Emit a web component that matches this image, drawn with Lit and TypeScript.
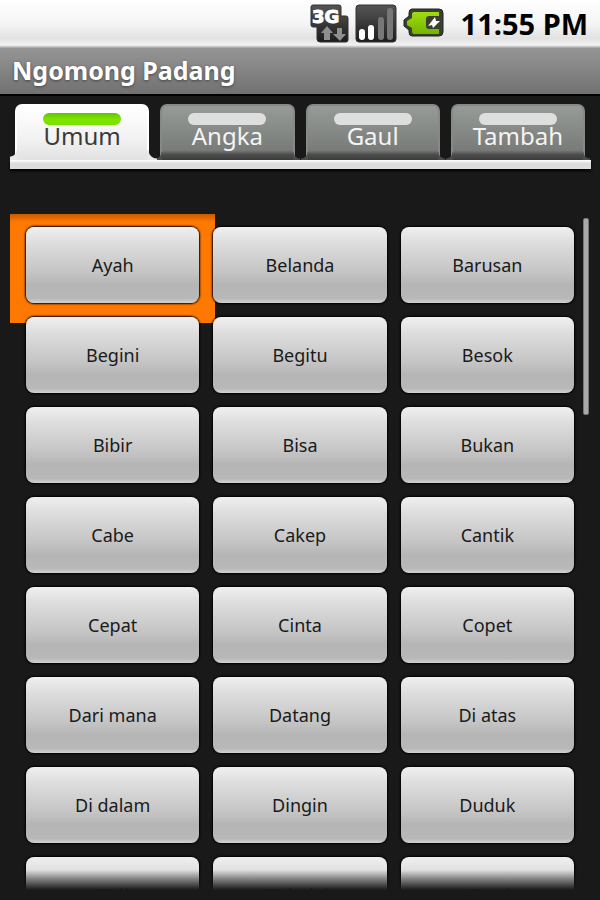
import { LitElement, html, css } from "lit";
import { customElement, state } from "lit/decorators.js";
import { classMap } from "lit/directives/class-map.js";

const TABS = ["Umum", "Angka", "Gaul", "Tambah"];

const WORDS = [
  "Ayah", "Belanda", "Barusan",
  "Begini", "Begitu", "Besok",
  "Bibir", "Bisa", "Bukan",
  "Cabe", "Cakep", "Cantik",
  "Cepat", "Cinta", "Copet",
  "Dari mana", "Datang", "Di atas",
  "Di dalam", "Dingin", "Duduk",
  "Gaji", "Geledah", "Gatal",
];

@customElement("status-bar")
class StatusBar extends LitElement {
  static styles = css`
    :host {
      display: flex;
      align-items: center;
      justify-content: flex-end;
      height: 48px;
      padding-right: 12px;
      box-sizing: border-box;
      background: linear-gradient(#ffffff, #f4f4f4 50%, #e2e2e2 80%, #f2f2f2 94%, #a0a0a0);
      color: #000;
      font-family: "Noto Sans", "Open Sans", sans-serif;
    }
    .icon { display: block; flex: none; }
    .network { font: 700 18px "DejaVu Sans", sans-serif; }
    .clock { margin-left: 15px; font-size: 29px; line-height: 32px; font-weight: 700; }
  `;

  render() {
    return html`
      <svg class="icon" width="136" height="48" viewBox="0 0 136 48" role="img" aria-label="3G, signal, battery charging">
        <defs>
          <linearGradient id="dark" x1="0" y1="0" x2="0" y2="1">
            <stop offset="0" stop-color="#555" />
            <stop offset="1" stop-color="#1c1c1c" />
          </linearGradient>
          <linearGradient id="green" x1="0" y1="0" x2="0" y2="1">
            <stop offset="0" stop-color="#a0dc10" />
            <stop offset="1" stop-color="#72b400" />
          </linearGradient>
        </defs>
        <path d="M3 5H29Q31 5 31 7V16H36Q38 16 38 18V40Q38 42 36 42H10Q7 42 7 39V27H3Q1 27 1 25V7Q1 5 3 5Z" fill="url(#dark)" stroke="#333" />
        <text class="network" x="2" y="23" fill="#fff" stroke="#fff">3G</text>
        <path d="M17 26L23 33H20V40H14V33H11ZM27 28H32V34H36L30 41L23 34H27Z" fill="#8f8f8f" />
        <rect x="46" y="5" width="40" height="37" rx="3" fill="url(#dark)" stroke="#333" />
        <rect x="49" y="29" width="6" height="11" rx="3" fill="#fff" />
        <rect x="58" y="25" width="6" height="15" rx="3" fill="#fff" />
        <rect x="68" y="17" width="6" height="23" rx="3" fill="#777" />
        <rect x="77" y="8" width="6" height="32" rx="3" fill="#777" />
        <path d="M102 9H129Q133 9 133 13V32Q133 36 129 36H102Q99 36 99 32V30L94 26V20L99 16V13Q99 9 102 9Z" fill="#3b3f30" stroke="#222" />
        <path d="M104 12H129V16H119Q116 16 116 19V26Q116 29 119 29H129V34H104Q102 34 102 31V28L97 25V21L102 18V15Q102 12 104 12Z" fill="url(#green)" />
        <path d="M118 26L125 17L126 21H130L123 28L122 25Z" fill="#fff" />
      </svg>
      <time class="clock" datetime="23:55">11:55 PM</time>
    `;
  }
}

@customElement("tab-strip")
class TabStrip extends LitElement {
  @state() selected = 0;

  static styles = css`
    :host { display: block; padding: 8px 9px 0 10px; }
    .tabs { display: grid; grid-template-columns: repeat(4, 1fr); }
    .tab {
      position: relative;
      display: flex;
      flex-direction: column;
      align-items: center;
      height: 56px;
      margin: 0 6px 0 5px;
      padding: 7px 0 0;
      border: 2px solid #868a86;
      border-bottom: 0;
      border-radius: 7px 7px 0 0;
      background: linear-gradient(#979b97, #787b78 82%, #4c4c4c 90%, #3c3c3c);
      color: #f4f4f4;
      font: 24px/26px "Noto Sans", "Open Sans", sans-serif;
    }
    .tab::before, .tab::after {
      content: "";
      position: absolute;
      bottom: 0;
      width: 7px;
      height: 8px;
    }
    .tab::before { right: 100%; background: radial-gradient(circle at 0 0, transparent 6px, #4c4c4c 7px); }
    .tab::after { left: 100%; background: radial-gradient(circle at 100% 0, transparent 6px, #4c4c4c 7px); }
    .light { flex: none; width: 78px; height: 12px; border-radius: 6px; background: #dedede; }
    .label { margin-top: -2px; }
    .on {
      z-index: 1;
      border-color: #fff;
      background: linear-gradient(#fff, #f2f2f2 60%, #e2e2e2);
      color: #3a3a3a;
    }
    .on::before { height: 10px; background: radial-gradient(circle at 0 0, transparent 6px, #e8e8e8 7px); }
    .on::after { width: 10px; height: 10px; background: radial-gradient(circle at 100% 0, transparent 8px, #e8e8e8 9px); }
    .on .light { background: linear-gradient(#5fc400, #7ee200 50%); }
    .base { height: 9px; background: linear-gradient(#fff, #dcdcdc 40%, #dcdcdc); box-shadow: 0 2px 3px #000; }
  `;

  render() {
    return html`
      <div class="tabs" role="tablist">
        ${TABS.map((name, i) => html`
          <button class=${classMap({ tab: true, on: i === this.selected })} role="tab"
            aria-selected=${i === this.selected} @click=${() => (this.selected = i)}>
            <span class="light"></span><span class="label">${name}</span>
          </button>`)}
      </div>
      <div class="base"></div>
    `;
  }
}

@customElement("app-root")
class AppRoot extends LitElement {
  @state() focused = 0;

  static styles = css`
    :host {
      display: flex;
      flex-direction: column;
      height: 100vh;
      background: #191919;
      font-family: "Noto Sans", "Open Sans", sans-serif;
    }
    .title {
      flex: none;
      margin: 0;
      height: 46px;
      padding: 0 12px;
      border-bottom: 2px solid #000;
      background: linear-gradient(#959595, #878787 40%, #717171);
      color: #fff;
      font-size: 25px;
      line-height: 44px;
      font-weight: 700;
      text-shadow: 0 1px 3px #444;
    }
    .list {
      position: relative;
      flex: 1;
      min-height: 0;
      margin: 45px 9px 8px 10px;
      overflow: hidden;
    }
    .grid {
      display: grid;
      grid-template-columns: repeat(3, 1fr);
      gap: 14px;
      padding: 13px 17px 13px 16px;
    }
    .cell { position: relative; display: flex; }
    .focus::before {
      content: "";
      position: absolute;
      inset: -13px -16px -20px;
      background: linear-gradient(#c85a00, #ff7800 8px);
    }
    .word {
      position: relative;
      flex: 1;
      height: 76px;
      padding: 0;
      border: 0;
      border-radius: 8px;
      background: linear-gradient(#f0f0f0, #dedede 20%, #c4c4c4 60%, #b5b5b5 76%, #b8b8b8 94%, #d2d2d2);
      box-shadow: 0 0 2px 1px #000;
      color: #1a1a1a;
      font: 18px/24px "Noto Sans", "Open Sans", sans-serif;
    }
    .fade {
      position: absolute;
      inset: auto 0 0;
      height: 22px;
      background: linear-gradient(transparent, #191919 20px);
      pointer-events: none;
    }
    .thumb {
      position: absolute;
      top: 4px;
      right: 2px;
      width: 6px;
      height: 197px;
      box-sizing: border-box;
      border: 1px solid #777;
      border-radius: 2px;
      background: #aaa;
    }
  `;

  render() {
    return html`
      <status-bar></status-bar>
      <h1 class="title">Ngomong Padang</h1>
      <tab-strip></tab-strip>
      <main class="list">
        <div class="grid">
          ${WORDS.map((word, i) => html`
            <div class=${classMap({ cell: true, focus: i === this.focused })}>
              <button class="word" @click=${() => (this.focused = i)}>${word}</button>
            </div>`)}
        </div>
        <div class="fade"></div>
        <div class="thumb"></div>
      </main>
    `;
  }
}
